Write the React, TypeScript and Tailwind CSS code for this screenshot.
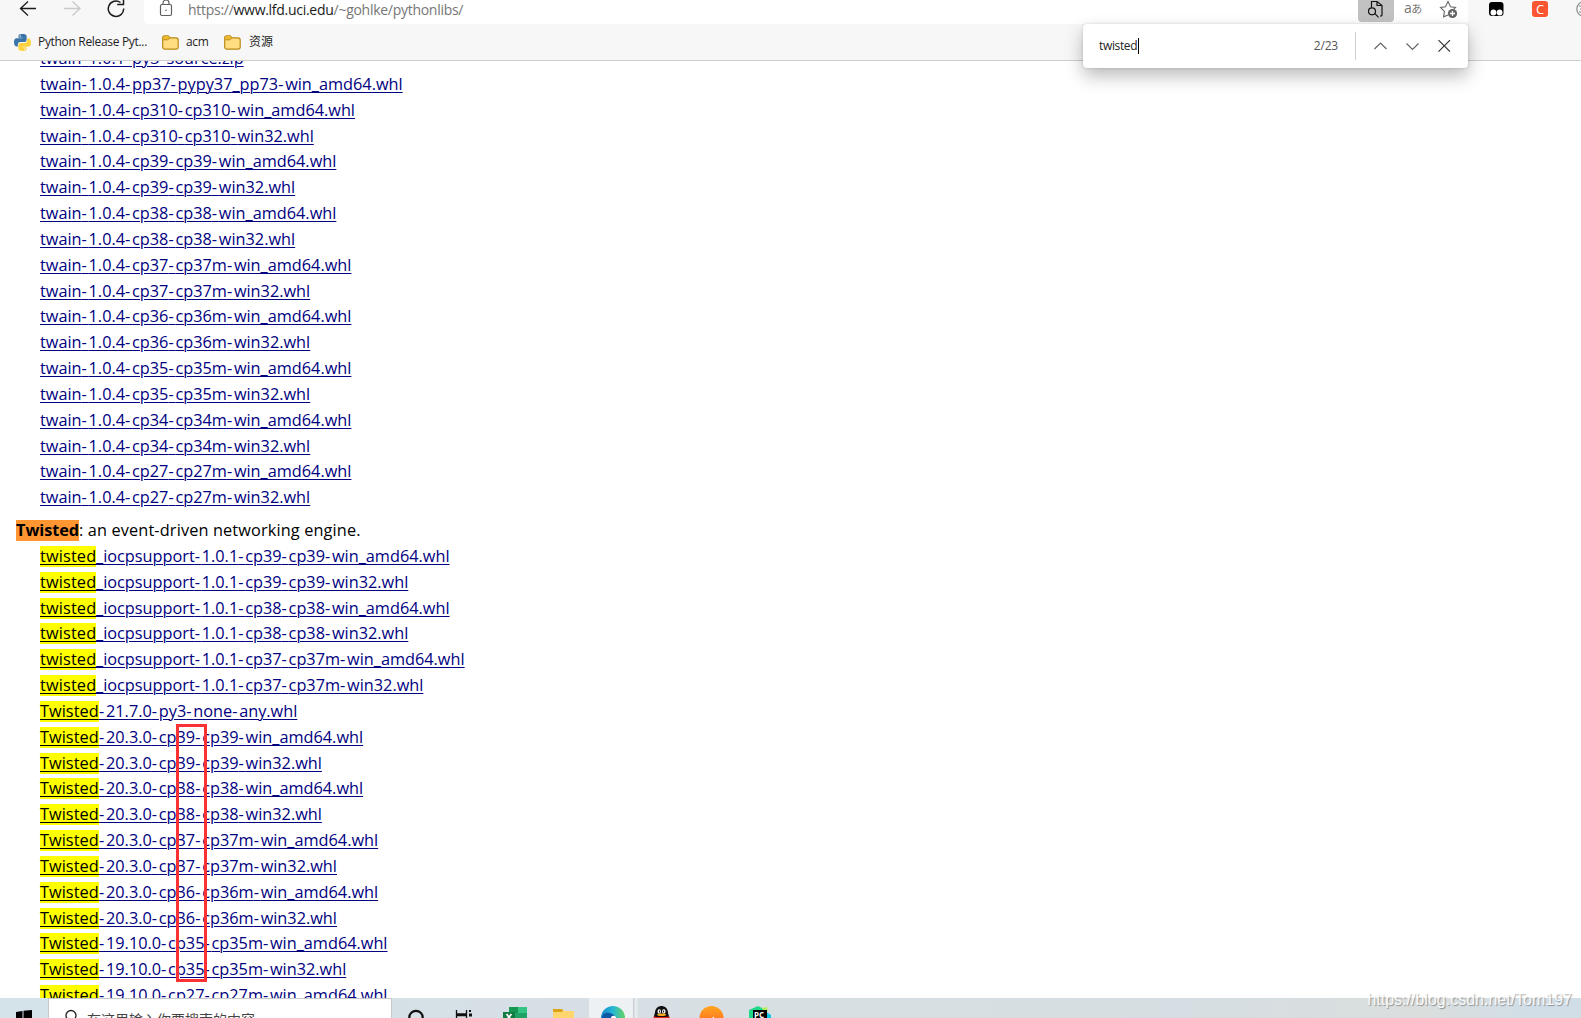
import React from "react";

const twain = [
  "1.0.1-py3-source.zip",
  "1.0.4-pp37-pypy37_pp73-win_amd64.whl",
  "1.0.4-cp310-cp310-win_amd64.whl",
  "1.0.4-cp310-cp310-win32.whl",
  "1.0.4-cp39-cp39-win_amd64.whl",
  "1.0.4-cp39-cp39-win32.whl",
  "1.0.4-cp38-cp38-win_amd64.whl",
  "1.0.4-cp38-cp38-win32.whl",
  "1.0.4-cp37-cp37m-win_amd64.whl",
  "1.0.4-cp37-cp37m-win32.whl",
  "1.0.4-cp36-cp36m-win_amd64.whl",
  "1.0.4-cp36-cp36m-win32.whl",
  "1.0.4-cp35-cp35m-win_amd64.whl",
  "1.0.4-cp35-cp35m-win32.whl",
  "1.0.4-cp34-cp34m-win_amd64.whl",
  "1.0.4-cp34-cp34m-win32.whl",
  "1.0.4-cp27-cp27m-win_amd64.whl",
  "1.0.4-cp27-cp27m-win32.whl",
];

const iocp = [
  "cp39-cp39-win_amd64.whl",
  "cp39-cp39-win32.whl",
  "cp38-cp38-win_amd64.whl",
  "cp38-cp38-win32.whl",
  "cp37-cp37m-win_amd64.whl",
  "cp37-cp37m-win32.whl",
];

const twisted = [
  "-21.7.0-py3-none-any.whl",
  "-20.3.0-cp39-cp39-win_amd64.whl",
  "-20.3.0-cp39-cp39-win32.whl",
  "-20.3.0-cp38-cp38-win_amd64.whl",
  "-20.3.0-cp38-cp38-win32.whl",
  "-20.3.0-cp37-cp37m-win_amd64.whl",
  "-20.3.0-cp37-cp37m-win32.whl",
  "-20.3.0-cp36-cp36m-win_amd64.whl",
  "-20.3.0-cp36-cp36m-win32.whl",
  "-19.10.0-cp35-cp35m-win_amd64.whl",
  "-19.10.0-cp35-cp35m-win32.whl",
  "-19.10.0-cp27-cp27m-win_amd64.whl",
];

function Row({ mark, text }: { mark?: string; text: string }) {
  return (
    <li className="flex h-[25.84px] items-center">
      {mark && (
        <mark
          className={
            (mark === "twisted" ? "w-[56px] tracking-[0.15px] " : "w-[59px] tracking-[0.05px] ") +
            "h-[21px] shrink-0 whitespace-nowrap bg-[#ffff00] leading-[21px] text-black underline decoration-1 underline-offset-2"
          }
        >
          {mark}
        </mark>
      )}
      <a className="h-[21px] whitespace-nowrap leading-[21px] text-[#000080] underline decoration-1 underline-offset-2">
        {text.split("-").map((part, i) => (
          <React.Fragment key={i}>
            {i > 0 && <span className="tracking-[1.75px]">-</span>}
            {part}
          </React.Fragment>
        ))}
      </a>
    </li>
  );
}

function Folder() {
  return (
    <svg width="17" height="15" viewBox="0 0 17 15">
      <path d="M.7 3A2.2 2.2 0 0 1 2.9.8h3.2l2 2H14A2.2 2.2 0 0 1 16.2 5v7a2.2 2.2 0 0 1-2.2 2.2H2.9A2.2 2.2 0 0 1 .7 12z" fill="#ffdd80" stroke="#b88a14" strokeWidth="1.2" />
      <path d="M1.2 4.8h4.500l2.400-2L6.100 1.300H2.900a1.700 1.700 0 0 0-1.700 1.700z" fill="#edb92e" />
      <path d="M1.200 4.800h4.500l2.400-2" fill="none" stroke="#b88a14" strokeWidth="1" />
    </svg>
  );
}

function Python() {
  return (
    <svg width="17" height="17" viewBox="0 0 24 24">
      <path fill="#3a74a8" d="M11.9 0C6 0 6.3 2.6 6.3 2.6v2.7H12v.8H4S0 5.7 0 11.7s3.500 5.800 3.500 5.800h2v-2.800s-.1-3.500 3.400-3.500h5.700s3.200.1 3.200-3.100V3.100S18.300 0 11.900 0zM8.700 1.800a1 1 0 1 1 0 2.100 1 1 0 0 1 0-2.100z" />
      <path fill="#ffd23f" d="M12.100 24c5.900 0 5.600-2.600 5.600-2.600v-2.700H12v-.8h8s4 .4 4-5.600-3.500-5.800-3.500-5.800h-2v2.800s.1 3.500-3.400 3.500H9.400s-3.200-.1-3.200 3.100v5S5.700 24 12.100 24zm3.200-1.800a1 1 0 1 1 0-2.100 1 1 0 0 1 0 2.100z" />
    </svg>
  );
}

function Toolbar() {
  return (
    <div className="flex h-6 items-start">
      <svg className="shrink-0" width="144" height="24" fill="none" strokeWidth="1.300">
        <path d="M36 8.500H21M28 1.500l-7.500 7 7.500 7" stroke="#1b1b1b" />
        <path d="M64 8.500h15.500M72.500 1.500l7.500 7-7.500 7" stroke="#c9c9c9" />
        <path d="M123.700 8.500a7.700 7.700 0 1 1-3.200-6M123.500-2v6.500h-6.300" stroke="#1b1b1b" strokeWidth="1.500" />
      </svg>
      <div className="flex h-6 w-[1324px] shrink-0 items-start rounded-b bg-white">
        <svg className="ml-[15px] shrink-0" width="14" height="18" fill="none" stroke="#5f5f5f" strokeWidth="1.200">
          <rect x="1.500" y="4.500" width="11" height="11" rx="1.500" />
          <path d="M4 4.500V3a3 3 0 0 1 6 0v1.500" />
          <circle cx="7" cy="10.200" r=".8" fill="#5f5f5f" stroke="none" />
        </svg>
        <span className="ml-[15px] w-[300px] whitespace-nowrap text-[14px] leading-[19px] tracking-[-0.28px] text-[#767676]">
          https://<span className="text-[#1a1a1a]">www.lfd.uci.edu</span>/~gohlke/pythonlibs/
        </span>
        <span className="ml-auto flex h-[22px] w-9 items-start justify-center rounded-b-sm bg-[#c2c2c2]">
          <svg width="18" height="20" fill="none" stroke="#111" strokeWidth="1.200">
            <path d="M4.500 7.500V1.500h5.500L15 5.500v9.500a1 1 0 0 1-1 1h-1M10 1.500V5.500h5" />
            <circle cx="5" cy="11.300" r="3.500" />
            <path d="M7.600 13.300l4 4" />
          </svg>
        </span>
        <span className="ml-[10px] w-5 whitespace-nowrap text-[14px] leading-[16px] tracking-[-0.5px] text-[#777]">
          a<span className="text-[11px]">あ</span>
        </span>
        <svg className="ml-[15px] mr-[9px] shrink-0" width="20" height="20" fill="none" stroke="#666" strokeWidth="1.100">
          <path d="M9 15l-4.400 1.800.8-5.400L1.500 7.500l5-.7L9 1.500l2.500 5.300 5 .7-1.800 1.800" />
          <circle cx="13.500" cy="13.500" r="4.600" fill="#666" stroke="none" />
          <path d="M13.500 11v5M11 13.500h5" stroke="#fff" strokeWidth="1.300" />
        </svg>
      </div>
      <div className="flex min-w-0 flex-1 items-start overflow-hidden">
        <svg className="ml-[21px] mt-[2px] shrink-0" width="15" height="15">
          <rect width="14.500" height="14" rx="3" fill="#000" />
          <circle cx="4.400" cy="10.500" r="2.900" fill="#fff" />
          <circle cx="10.600" cy="10.500" r="2.900" fill="#fff" />
        </svg>
        <span className="ml-[28px] mt-px flex size-4 shrink-0 items-center justify-center rounded-[3px] bg-[#fc5531] text-[13px] font-medium leading-none text-white">C</span>
        <svg className="ml-[28px] mt-px shrink-0" width="16" height="16" fill="none" stroke="#8a8a8a" strokeWidth="1.200">
          <circle cx="8" cy="8" r="7.200" />
          <path d="M3 5h6M4 8h4M3 11h6M6 3v10" />
        </svg>
      </div>
    </div>
  );
}

function FindBar() {
  return (
    <div className="absolute left-[1083px] top-6 z-10 flex h-11 w-[385px] items-center rounded bg-white text-[12px] text-[#222] shadow-[0_8px_18px_rgba(0,0,0,0.27),0_0_3px_rgba(0,0,0,0.15)]">
      <span className="ml-4 whitespace-nowrap tracking-[-0.35px]">twisted</span>
      <span className="ml-px h-4 w-px bg-black" />
      <span className="ml-auto mr-[17px] whitespace-nowrap tracking-[-0.2px] text-[#555]">2/23</span>
      <span className="h-7 w-px bg-[#cfcfcf]" />
      <svg className="ml-[17px] mr-[16px]" width="79" height="20" fill="none" stroke="#666" strokeWidth="1.200">
        <path d="M1.500 13l6-6 6 6M33.500 7.500l6 6 6-6" />
        <path d="M65.500 4.200l11.500 11.500M77 4.200L65.500 15.700" stroke="#333" />
      </svg>
    </div>
  );
}

function Taskbar() {
  return (
    <footer className="relative flex h-5 shrink-0 overflow-hidden bg-[linear-gradient(90deg,#d4e2ea_0%,#d6dfe5_35%,#d8dfe3_50%,#d6dee3_75%,#dadedd_90%,#d1dee7_97%)]">
      <svg className="ml-4 mt-3 shrink-0" width="16" height="16">
        <path d="M0 2l6.500-1v7H0zM7.500.800L16 0v8H7.500z" fill="#000" />
      </svg>
      <div className="ml-4 flex h-10 w-[344px] shrink-0 border border-[#c6c9cb] bg-white">
        <svg className="ml-[15px] mt-[10px] shrink-0" width="15" height="18" fill="none" stroke="#222" strokeWidth="1.300">
          <circle cx="7" cy="6.500" r="5" />
          <path d="M3.500 10L0 14" />
        </svg>
        <span className="ml-[8px] mt-[11px] whitespace-nowrap text-[14px] leading-5 text-[#444]">在这里输入你要搜索的内容</span>
      </div>
      <svg className="shrink-0" width="398" height="20">
        <circle cx="24" cy="19.500" r="6.700" fill="none" stroke="#111" strokeWidth="2.200" />
        <path d="M64.500 12v4h10v-4M64.500 20v-2.500h10V20" fill="none" stroke="#111" strokeWidth="1.300" />
        <path d="M77 12h2v2h-2zM77 15.500h3v3h-3z" fill="#111" />
        <path d="M117 9h18v11h-18z" fill="#21a366" />
        <path d="M117 9h9v6h-9z" fill="#159653" />
        <path d="M126 9h9v6h-9z" fill="#33c481" />
        <path d="M111 14h12v6h-12z" fill="#107c41" />
        <path d="M114.500 16l4 5M119.500 16l-4 5" stroke="#fff" strokeWidth="1.700" />
        <path d="M161 11h9l2 2h10v7h-21z" fill="#ffd66e" />
        <path d="M161 11h9l1 1.500-1 1.500h-9z" fill="#dca218" />
        <rect x="197" width="44" height="20" fill="#edf1f3" />
        <rect x="241" width="1.500" height="20" fill="#c9cfd3" />
        <rect x="242.500" width="3" height="20" fill="#e8ecee" />
        <defs>
          <linearGradient id="edge"><stop stopColor="#1687ce" /><stop offset=".5" stopColor="#27b6d5" /><stop offset="1" stopColor="#65d560" /></linearGradient>
          <linearGradient id="orange" x2="0" y2="1"><stop stopColor="#ffa51f" /><stop offset="1" stopColor="#ff5a20" /></linearGradient>
        </defs>
        <circle cx="221" cy="20" r="12" fill="url(#edge)" />
        <path d="M210 20c0-7 11-7 14 0z" fill="#0c59a4" />
        <path d="M219 20c0-3 5-3 5 0z" fill="#fff" />
        <path d="M262 20c0-4 1-4 1-6 1-8 12-8 13 0 0 2 1 2 1 6z" fill="#111" />
        <ellipse cx="267.300" cy="13.500" rx="1.700" ry="2.200" fill="#fff" />
        <ellipse cx="271.800" cy="13.500" rx="1.700" ry="2.200" fill="#fff" />
        <path d="M267.600 12.500v2M271.600 12.500v2" stroke="#111" />
        <ellipse cx="269.600" cy="16.800" rx="4.500" ry="1.300" fill="#f6a81c" />
        <path d="M261.500 18.500q8.200 1 16.200 0V20h-16.200z" fill="#e2231a" />
        <circle cx="319.500" cy="20" r="12" fill="url(#orange)" />
        <path d="M320 20l2-1.500v1.500z" fill="#fff" />
        <path d="M357 12l9-4 8 4v8h-17z" fill="#21d789" />
        <path d="M370 10l5-1 1 4-4 1z" fill="#b9ef5c" />
        <path d="M374 14l5 3v3h-5z" fill="#0cc5e8" />
        <rect x="361" y="12" width="14" height="8" fill="#000" />
        <text x="362" y="20" fill="#fff" fontSize="8" fontWeight="700">PC</text>
      </svg>
    </footer>
  );
}

export default function App() {
  return (
    <div className="relative flex h-[1018px] w-[1581px] flex-col overflow-hidden bg-white font-['Open_Sans','Noto_Sans_CJK_SC',sans-serif]">
      <header className="h-[61px] shrink-0 border-b border-[#cdcdcd] bg-[#f7f7f7]">
        <Toolbar />
        <nav className="flex h-9 items-center text-[12px] text-[#1f1f1f]">
          <span className="ml-[14px] flex"><Python /></span>
          <span className="ml-[7px] w-[109px] whitespace-nowrap tracking-[-0.32px]">Python Release Pyt...</span>
          <span className="ml-[15px] flex"><Folder /></span>
          <span className="ml-[7px] w-[22px] whitespace-nowrap tracking-[-0.3px]">acm</span>
          <span className="ml-4 flex"><Folder /></span>
          <span className="ml-2">资源</span>
        </nav>
      </header>
      <FindBar />
      <main className="relative min-h-0 flex-1 overflow-hidden text-[16.3px]">
        <ul className="-mt-[15.3px] ml-10">
          {twain.map((t) => <Row key={t} text={"twain-" + t} />)}
        </ul>
        <p className="ml-4 mt-[7px] flex h-[25.91px] items-center whitespace-nowrap leading-[21px] text-black">
          <mark className="h-[21px] w-[63px] bg-[#ff9632] font-bold tracking-[-0.05px]">Twisted</mark>
          <span className="tracking-[0.14px]">: an event-driven networking engine.</span>
        </p>
        <ul className="ml-10">
          {iocp.map((t) => <Row key={t} mark="twisted" text={"_iocpsupport-1.0.1-" + t} />)}
          {twisted.map((t) => <Row key={t} mark="Twisted" text={t} />)}
        </ul>
        <div className="absolute left-[176px] top-[663px] h-[258px] w-[31px] border-[3px] border-[#fa3233]" />
      </main>
      <Taskbar />
      <span className="absolute bottom-[8px] right-[9px] whitespace-nowrap font-['Liberation_Sans',sans-serif] text-[16px] leading-5 text-white/90 [text-shadow:1px_1px_1px_rgba(0,0,0,0.35)]">
        https://blog.csdn.net/Tom197
      </span>
    </div>
  );
}
